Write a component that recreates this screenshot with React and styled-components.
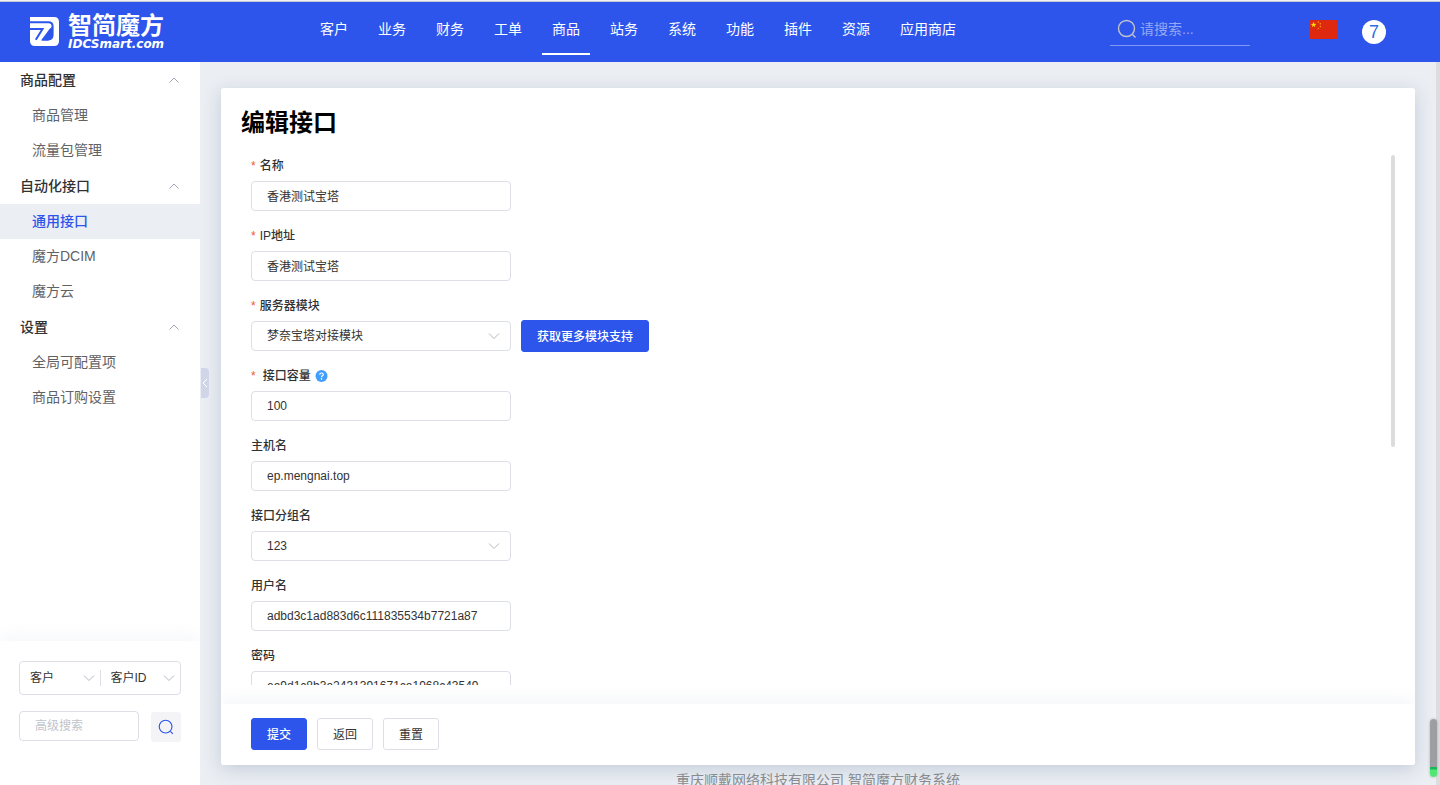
import React, { useState } from "react";
import styled, { createGlobalStyle } from "styled-components";

const GlobalStyle = createGlobalStyle`
  * {
    box-sizing: border-box;
  }

  body {
    margin: 0;
    color: #333;
    font-family: "Liberation Sans", "Noto Sans CJK SC", sans-serif;
    font-size: 12px;
  }

  button,
  input,
  select {
    font-family: inherit;
    font-size: 12px;
    color: #333;
  }
`;

const Page = styled.div`
  position: relative;
  display: flex;
  flex-direction: column;
  height: 100vh;
  overflow: hidden;
  background: #ebeef3;
`;

const Header = styled.header`
  display: flex;
  flex: none;
  align-items: flex-start;
  height: 62px;
  padding: 1px 54px 0 0;
  border-top: 1px solid #f2f3f5;
  background: #2d55eb;
  box-shadow: inset 0 1px #c3c7d2;
`;

const Logo = styled.a`
  display: flex;
  gap: 9px;
  width: 310px;
  padding: 12px 0 0 30px;
  color: #fff;
  text-decoration: none;

  svg {
    width: 29px;
    height: 29px;
    margin-top: 3px;
  }
`;

const LogoText = styled.span`
  display: flex;
  flex-direction: column;
  font-size: 24px;
  font-weight: bold;
  line-height: 24px;

  small {
    font-family: "DejaVu Sans", sans-serif;
    font-size: 12px;
    font-style: italic;
    font-weight: bold;
    line-height: 12px;
  }
`;

const TopNav = styled.nav`
  display: flex;
  flex: 1;
  gap: 10px;
`;

const TopLink = styled.a`
  padding: 3px 10px 0;
  border-bottom: 2px solid ${(props) => (props.$active ? "#fff" : "transparent")};
  color: #fff;
  font-size: 14px;
  line-height: 48px;
  white-space: nowrap;
  text-decoration: none;
`;

const TopSearch = styled.label`
  display: flex;
  align-items: center;
  gap: 3px;
  width: 140px;
  height: 33px;
  margin: 11px 59px 0 0;
  padding-left: 7px;
  border-bottom: 1px solid #8199f3;

  svg {
    flex: none;
    color: #c0c4cc;
  }

  input {
    width: 100%;
    min-width: 0;
    padding: 0;
    border: 0;
    outline: none;
    background: transparent;
    color: #fff;
    font-size: 14px;
  }

  input::placeholder {
    color: #94a8f5;
  }
`;

const FlagButton = styled.button`
  margin: 18px 25px 0 0;
  padding: 0;
  border: 0;
  background: none;

  svg {
    display: block;
  }
`;

const Avatar = styled.button`
  width: 24px;
  height: 24px;
  margin-top: 18px;
  padding: 0;
  border: 0;
  border-radius: 50%;
  background: #fff;
  color: #2d6fe0;
  font-size: 18px;
  line-height: 24px;
`;

const Body = styled.div`
  display: flex;
  flex: 1;
  min-height: 0;
`;

const Sidebar = styled.aside`
  display: flex;
  flex: none;
  flex-direction: column;
  width: 200px;
  background: #fff;
`;

const Menu = styled.nav`
  flex: 1;
  overflow: hidden;
`;

const MenuTitle = styled.button`
  display: flex;
  align-items: center;
  justify-content: space-between;
  width: 100%;
  height: 36px;
  padding: 0 20px 2px;
  border: 0;
  background: none;
  color: #303133;
  font-size: 14px;
  font-weight: 500;

  svg {
    color: #a0a3b5;
  }
`;

const MenuLink = styled.a`
  display: block;
  padding-left: 32px;
  background: ${(props) => (props.$active ? "#ebeef3" : "transparent")};
  color: ${(props) => (props.$active ? "#2d55eb" : "#606266")};
  font-size: 14px;
  font-weight: ${(props) => (props.$active ? 500 : 400)};
  line-height: 35px;
  text-decoration: none;
`;

const AdvancedSearch = styled.form`
  display: flex;
  flex-direction: column;
  gap: 16px;
  height: 144px;
  padding: 20px 19px;
  background: #fff;
  box-shadow: 0 -4px 18px rgba(45, 85, 160, 0.05);
  clip-path: inset(-24px 0 0 0);
`;

const SearchKinds = styled.div`
  display: flex;
  align-items: center;
  height: 34px;
  border: 1px solid #dcdfe6;
  border-radius: 4px;
`;

const KindDivider = styled.span`
  width: 1px;
  height: 16px;
  background: #dcdfe6;
`;

const SearchRow = styled.div`
  display: flex;
  gap: 12px;
`;

const SearchButton = styled.button`
  display: flex;
  flex: none;
  align-items: center;
  justify-content: center;
  width: 30px;
  height: 30px;
  margin-top: 1px;
  padding: 0;
  border: 0;
  border-radius: 3px;
  background: #f4f4f6;
  color: #2d55eb;
`;

const SelectWrap = styled.span`
  position: relative;
  display: block;
  width: ${(props) => (props.$bare ? "80px" : "260px")};

  svg {
    position: absolute;
    top: 50%;
    right: ${(props) => (props.$bare ? "5px" : "11px")};
    margin-top: -6px;
    color: #b4b8c2;
    pointer-events: none;
  }

  select {
    appearance: none;
    width: 100%;
    height: 30px;
    padding: 0 ${(props) => (props.$bare ? "10px" : "15px")};
    border: ${(props) => (props.$bare ? "0" : "1px solid #dcdfe6")};
    border-radius: 4px;
    outline: none;
    background: transparent;
  }
`;

const TextInput = styled.input`
  width: ${(props) => (props.$small ? "120px" : "260px")};
  height: 30px;
  padding: 0 15px 1px;
  border: 1px solid #dcdfe6;
  border-radius: 4px;
  outline: none;
  background: #fff;

  &::placeholder {
    color: #c0c4cc;
  }
`;

const Main = styled.main`
  position: relative;
  display: flex;
  flex: 1;
  flex-direction: column;
  min-width: 0;
  padding: 26px 21px 0;
`;

const CollapseHandle = styled.button`
  position: absolute;
  top: 306px;
  left: 1px;
  display: flex;
  align-items: center;
  justify-content: center;
  width: 8px;
  height: 30px;
  padding: 0;
  border: 0;
  border-radius: 0 4px 4px 0;
  background: #d0d6e8;
  color: #fff;
`;

const Card = styled.section`
  display: flex;
  flex: 1;
  flex-direction: column;
  min-height: 0;
  border-radius: 3px;
  background: #fff;
  box-shadow: 0 4px 18px rgba(70, 95, 140, 0.24);
`;

const Title = styled.h1`
  margin: 0;
  padding: 18px 20px 15px;
  color: #000;
  font-size: 24px;
  font-weight: bold;
  line-height: 34px;
`;

const FormScroll = styled.div`
  position: relative;
  flex: 1;
  min-height: 0;
  margin: 0 20px 19px 30px;
  overflow: hidden;
`;

const ScrollThumb = styled.span`
  position: absolute;
  top: 0;
  right: 0;
  width: 4px;
  height: 55%;
  border-radius: 2px;
  background: #dcdcdd;
`;

const Field = styled.div`
  padding-top: 1px;
  margin-bottom: 14px;
`;

const FieldLabel = styled.label`
  display: flex;
  align-items: center;
  gap: 4px;
  margin-bottom: 5px;
  color: #303133;
  font-weight: 500;
  line-height: 20px;
`;

const Required = styled.span`
  padding-right: ${(props) => (props.$wide ? "3px" : "0")};
  color: #f0562e;
`;

const Control = styled.div`
  display: flex;
  align-items: center;
  gap: 10px;
  height: 30px;
`;

const Button = styled.button`
  height: 32px;
  padding: 0 15px 2px;
  border: 1px solid ${(props) => (props.$primary ? "#2d55eb" : "#dcdfe6")};
  border-radius: 3px;
  background: ${(props) => (props.$primary ? "#2d55eb" : "#fff")};
  color: ${(props) => (props.$primary ? "#fff" : "#333")};
  font-weight: ${(props) => (props.$primary ? 500 : 400)};
`;

const Actions = styled.div`
  display: flex;
  flex: none;
  gap: 10px;
  padding: 14px 30px 15px;
  border-radius: 0 0 3px 3px;
  background: #fff;
  box-shadow: 0 -6px 16px -2px rgba(45, 85, 160, 0.06);
  clip-path: inset(-19px 0 0 0);
`;

const Footer = styled.footer`
  flex: none;
  height: 20px;
  padding-top: 5px;
  color: #888b90;
  font-size: 14px;
  line-height: 20px;
  text-align: center;
`;

const PageTrack = styled.div`
  flex: none;
  width: 4px;
  background: #dddddf;
`;

const PageThumb = styled.span`
  position: absolute;
  right: 3px;
  bottom: 8px;
  width: 7px;
  height: 58px;
  border-radius: 4px;
  background: linear-gradient(#9d9ea1 48px, #1eb45a 48px, #1eb45a 50px, #52e673 51px);
  box-shadow: 0 0 3px rgba(0, 0, 0, 0.25);
`;

const LogoMark = () => (
  <svg viewBox="0 0 29 29" fill="none">
    <path d="M0 0H24Q29 0 29 5V24Q29 29 24 29H5Q0 29 0 24Z" fill="currentColor" />
    <g stroke="#2d55eb" strokeWidth="2">
      <path d="M0 5.3H18.5Q22.6 5.3 22.6 9.3V18Q22.6 22.4 18.3 22.4H12.5" />
      <path d="M0 12H12.5L5.8 22.8" />
    </g>
    <path d="M11 23.4L19.5 12L23 9V18L18.3 23.4Z" fill="#2d55eb" />
    <path d="M16 21.4L21.6 14V18Q21.6 21.4 18.3 21.4Z" fill="#2d55eb" />
  </svg>
);

const SearchIcon = ({ size }) => (
  <svg width={size} height={size} viewBox="0 0 20 20" fill="none" stroke="currentColor">
    <circle cx="9.5" cy="9.5" r="8" strokeWidth="1.4" />
    <path d="M15.5 15.5L18.5 18.5" strokeWidth="1.4" />
  </svg>
);

const Chevron = ({ up }) => (
  <svg width="12" height="12" viewBox="0 0 12 12" fill="none" stroke="currentColor">
    <path d={up ? "M1.5 9.5L6 5L10.5 9.5" : "M1 3.5L6 8.5L11 3.5"} />
  </svg>
);

const star = "0,-3 .7,-1 2.9,-.9 1.1,.4 1.8,2.4 0,1.2 -1.8,2.4 -1.1,.4 -2.9,-.9 -.7,-1";

const Flag = () => (
  <svg width="28" height="19" viewBox="0 0 28 19">
    <rect width="28" height="19" fill="#de2910" />
    <g fill="#ffde00">
      <polygon points={star} transform="translate(4.6 4.8)" />
      <g opacity="0.75">
        <circle cx="9.3" cy="2" r="0.7" />
        <circle cx="11.3" cy="3.8" r="0.7" />
        <circle cx="11.3" cy="6.5" r="0.7" />
        <circle cx="9.3" cy="8.6" r="0.7" />
      </g>
    </g>
  </svg>
);

const HelpIcon = () => (
  <svg width="13" height="13" viewBox="0 0 13 13" fill="none">
    <circle cx="6.5" cy="6" r="6" fill="#409eff" />
    <path
      d="M4.7 4.7Q4.8 3 6.5 3T8.3 4.5Q8.3 5.3 7.3 5.9Q6.5 6.3 6.5 7.2"
      stroke="#fff"
      strokeWidth="1.2"
    />
    <circle cx="6.5" cy="8.9" r="0.8" fill="#fff" />
  </svg>
);

const topLinks = [
  "客户",
  "业务",
  "财务",
  "工单",
  "商品",
  "站务",
  "系统",
  "功能",
  "插件",
  "资源",
  "应用商店",
];

const menu = [
  { title: "商品配置", items: ["商品管理", "流量包管理"] },
  { title: "自动化接口", items: ["通用接口", "魔方DCIM", "魔方云"] },
  { title: "设置", items: ["全局可配置项", "商品订购设置"] },
];

const fields = [
  { id: "name", label: "名称", value: "香港测试宝塔", required: true },
  { id: "ip", label: "IP地址", value: "香港测试宝塔", required: true },
  {
    id: "module",
    label: "服务器模块",
    value: "梦奈宝塔对接模块",
    required: true,
    select: true,
    action: "获取更多模块支持",
  },
  { id: "capacity", label: "接口容量", value: "100", required: true, help: true },
  { id: "host", label: "主机名", value: "ep.mengnai.top" },
  { id: "group", label: "接口分组名", value: "123", select: true },
  { id: "user", label: "用户名", value: "adbd3c1ad883d6c111835534b7721a87" },
  { id: "password", label: "密码", value: "ea9d1c8b3a2431391671ca1968c43549" },
];

function Select({ id, label, value, bare }) {
  return (
    <SelectWrap $bare={bare}>
      <select id={id} aria-label={label} defaultValue={value}>
        <option>{value}</option>
      </select>
      <Chevron />
    </SelectWrap>
  );
}

function FormField({ field }) {
  return (
    <Field>
      <FieldLabel htmlFor={field.id}>
        {field.required && <Required $wide={field.help}>*</Required>}
        {field.label}
        {field.help && <HelpIcon />}
      </FieldLabel>
      <Control>
        {field.select ? (
          <Select id={field.id} value={field.value} />
        ) : (
          <TextInput id={field.id} defaultValue={field.value} />
        )}
        {field.action && (
          <Button type="button" $primary>
            {field.action}
          </Button>
        )}
      </Control>
    </Field>
  );
}

export default function App() {
  const [current, setCurrent] = useState("通用接口");

  return (
    <Page>
      <GlobalStyle />
      <Header>
        <Logo href="#">
          <LogoMark />
          <LogoText>
            智简魔方
            <small>IDCSmart.com</small>
          </LogoText>
        </Logo>
        <TopNav>
          {topLinks.map((text) => (
            <TopLink key={text} href="#" $active={text === "商品"}>
              {text}
            </TopLink>
          ))}
        </TopNav>
        <TopSearch>
          <SearchIcon size={20} />
          <input placeholder="请搜索..." />
        </TopSearch>
        <FlagButton type="button" aria-label="中文">
          <Flag />
        </FlagButton>
        <Avatar type="button">7</Avatar>
      </Header>
      <Body>
        <Sidebar>
          <Menu>
            {menu.map((group) => (
              <div key={group.title}>
                <MenuTitle type="button">
                  {group.title}
                  <Chevron up />
                </MenuTitle>
                {group.items.map((item) => (
                  <MenuLink
                    key={item}
                    href="#"
                    $active={item === current}
                    onClick={() => setCurrent(item)}
                  >
                    {item}
                  </MenuLink>
                ))}
              </div>
            ))}
          </Menu>
          <AdvancedSearch>
            <SearchKinds>
              <Select label="类型" value="客户" bare />
              <KindDivider />
              <Select label="字段" value="客户ID" bare />
            </SearchKinds>
            <SearchRow>
              <TextInput $small placeholder="高级搜索" aria-label="高级搜索" />
              <SearchButton type="button" aria-label="搜索">
                <SearchIcon size={16} />
              </SearchButton>
            </SearchRow>
          </AdvancedSearch>
        </Sidebar>
        <Main>
          <CollapseHandle type="button" aria-label="收起">
            <svg width="6" height="10" viewBox="0 0 6 10" fill="none" stroke="currentColor">
              <path d="M5 1L1 5L5 9" />
            </svg>
          </CollapseHandle>
          <Card>
            <Title>编辑接口</Title>
            <FormScroll>
              {fields.map((field) => (
                <FormField key={field.id} field={field} />
              ))}
              <ScrollThumb />
            </FormScroll>
            <Actions>
              <Button type="submit" $primary>
                提交
              </Button>
              <Button type="button">返回</Button>
              <Button type="reset">重置</Button>
            </Actions>
          </Card>
          <Footer>重庆顺戴网络科技有限公司 智简魔方财务系统</Footer>
        </Main>
        <PageTrack />
      </Body>
      <PageThumb />
    </Page>
  );
}
